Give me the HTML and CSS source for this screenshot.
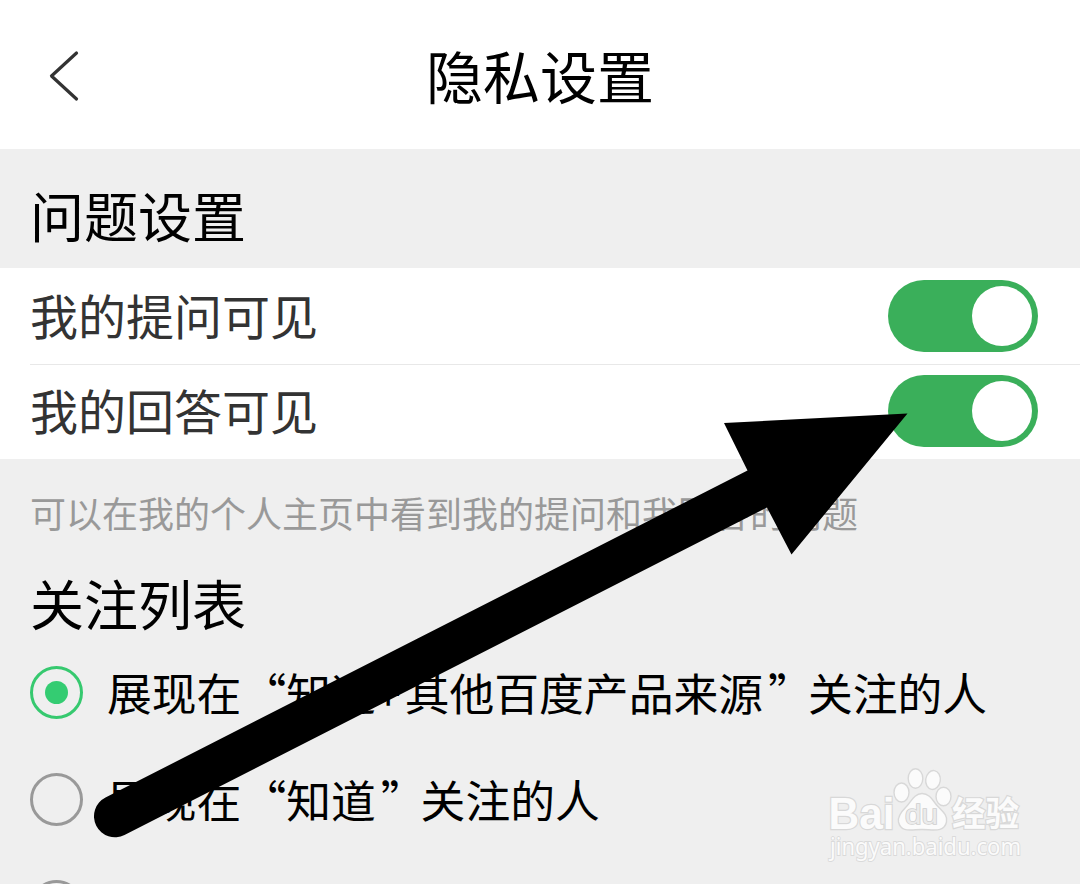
FILE: index.html
```
<!DOCTYPE html>
<html lang="zh-CN">
<head>
    <meta charset="UTF-8">
    <title>隐私设置</title>
    <link rel="stylesheet" href="styles.css">
</head>
<body>
<div class="header">
    <a class="back">
        <svg width="32" height="52" viewBox="0 0 32 52"><path d="M28.5 3L3.5 26L28.5 49"/></svg>
    </a>
    <h1>隐私设置</h1>
</div>
<h2 class="title title1">问题设置</h2>
<div class="list">
    <div class="row"><span>我的提问可见</span><i class="switch"></i></div>
    <div class="row"><span>我的回答可见</span><i class="switch"></i></div>
</div>
<p class="tip">可以在我的个人主页中看到我的提问和我回答的问题</p>
<h2 class="title title2">关注列表</h2>
<div class="options">
    <div class="option"><i class="radio on"></i><span>展现在“知道<b class="plus">+</b>其他百度产品来源<b class="quote">”</b>关注的人</span></div>
    <div class="option"><i class="radio"></i><span>展现在“知道<b class="quote">”</b>关注的人</span></div>
    <div class="option"><i class="radio"></i></div>
</div>
<!--水印-->
<svg class="logo" width="210" height="110" viewBox="820 760 210 110">
    <text class="big" x="828.5" y="829" font-size="45" textLength="66" lengthAdjust="spacingAndGlyphs">Bai</text>
    <ellipse cx="901.5" cy="792.5" rx="7.5" ry="9.5"/>
    <ellipse cx="915.5" cy="778.5" rx="7.3" ry="9.7"/>
    <ellipse cx="933" cy="780" rx="7.3" ry="9.5" transform="rotate(8 933 780)"/>
    <ellipse cx="943.5" cy="796.5" rx="7.5" ry="9.3"/>
    <path d="M922 793.5C914 793.5 911 802 906 807C900 813 897.5 817 898.5 822C901 833 911 829.5 922 829.5C933 829.5 944 833 946.5 822C948 815 942 811 937 805.5C933 801 930 793.5 922 793.5Z"/>
    <text class="du" x="905" y="824" font-size="28" textLength="33" lengthAdjust="spacingAndGlyphs">du</text>
    <text class="cn" x="952" y="826" font-size="34" textLength="67" lengthAdjust="spacingAndGlyphs">经验</text>
    <text class="url" x="830" y="855" font-size="23" textLength="191" lengthAdjust="spacingAndGlyphs">jingyan.baidu.com</text>
</svg>
<!--箭头-->
<svg class="arrow" width="1080" height="884" viewBox="0 0 1080 884">
    <path d="M105.5 797.5L747.5 470.5L724 423L907.5 413.5L791.5 554.5L767 507.5L124.5 835A21 21 0 0 1 105.5 797.5Z"/>
</svg>
</body>
</html>
```

FILE: styles.css
```
*{
    box-sizing: border-box;
}
body{
    position: relative;
    margin: 0;
    height: 884px;
    overflow: hidden;
    background-color: #efefef;
    color: #000000;
    font-family: "Noto Sans CJK SC", sans-serif;
}
h1, h2, p{
    margin: 0;
    font-weight: normal;
}
.header{
    display: grid;
    grid-template-columns: 110px 1fr 110px;
    align-items: center;
    height: 149px;
    padding-top: 4px;
    background-color: #ffffff;
}
.back{
    height: 53px;
    padding-left: 48px;
}
.back svg{
    display: block;
    fill: none;
    stroke: #333333;
    stroke-width: 3.2px;
    stroke-linecap: round;
    stroke-linejoin: round;
}
.header h1{
    padding-bottom: 5px;
    text-align: center;
    font-size: 57px;
    line-height: 80px;
}
.title{
    padding-left: 30px;
    font-size: 54px;
    line-height: 80px;
}
.title1{
    height: 119px;
    padding-top: 26px;
}
.list{
    height: 191px;
    background-color: #ffffff;
}
.row{
    display: flex;
    align-items: center;
    justify-content: space-between;
    height: 96px;
    margin-left: 30px;
    padding-right: 42px;
    font-size: 48px;
    line-height: 70px;
    color: #333333;
}
.row span{
    padding-bottom: 4px;
}
.row + .row{
    height: 95px;
    padding-bottom: 3px;
    border-top: 1px solid #e8e8e8;
}
.switch{
    width: 150px;
    height: 72px;
    padding: 6px;
    border-radius: 36px;
    background-color: #3aaf5a;
}
.switch::after{
    content: "";
    display: block;
    width: 60px;
    height: 60px;
    margin-left: auto;
    border-radius: 50%;
    background-color: #ffffff;
}
.tip{
    height: 104px;
    padding: 26px 0 0 30px;
    font-size: 36px;
    line-height: 54px;
    color: #999999;
}
.title2{
    height: 76px;
}
.options{
    height: 245px;
    padding-left: 30px;
    overflow: hidden;
}
.option{
    display: flex;
    align-items: center;
    gap: 24px;
    height: 107px;
    font-size: 44.8px;
    line-height: 66px;
    white-space: nowrap;
}
.option span{
    padding-bottom: 1px;
}
.option b{
    font-weight: normal;
}
.plus{
    letter-spacing: 4px;
}
.quote{
    margin: 0 -5px 0 5px;
}
.radio{
    display: flex;
    align-items: center;
    justify-content: center;
    width: 53px;
    height: 53px;
    border: 3px solid #999999;
    border-radius: 50%;
}
.on{
    border-color: #36c96f;
}
.on::after{
    content: "";
    width: 23px;
    height: 23px;
    border-radius: 50%;
    background-color: #34cc72;
}
.logo{
    position: absolute;
    left: 820px;
    top: 760px;
    fill: #fbfbfb;
    stroke: #d8d8d8;
    stroke-width: 1.4px;
}
.logo text{
    paint-order: stroke;
    stroke-width: 2.4px;
}
.big{
    font-family: "Liberation Sans", sans-serif;
    font-weight: bold;
}
.logo .du{
    font-family: "Liberation Sans", sans-serif;
    fill: #ebebeb;
    stroke: #cfcfcf;
    stroke-width: 1.6px;
}
.cn{
    font-weight: bold;
}
.logo .url{
    font-family: "Noto Sans", sans-serif;
    stroke: #dadada;
    stroke-width: 1.8px;
}
.arrow{
    position: absolute;
    left: 0;
    top: 0;
}
```
